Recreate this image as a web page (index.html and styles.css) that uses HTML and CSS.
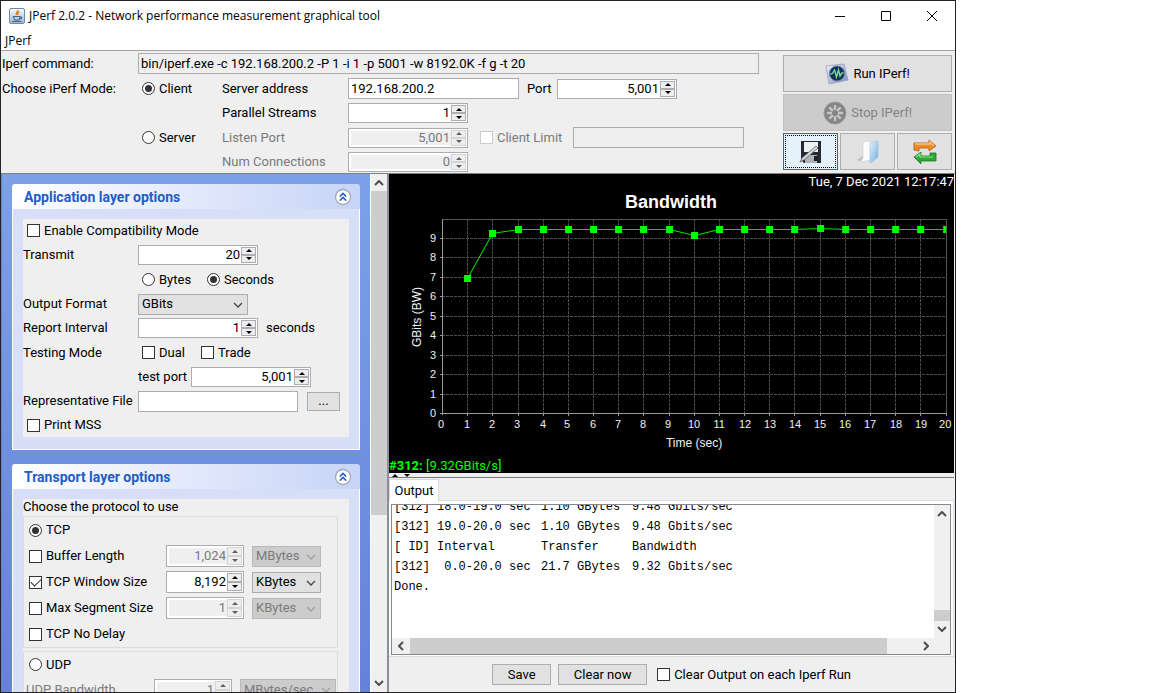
FILE: index.html
```html
<!DOCTYPE html>
<html lang="en">
<head>
<meta charset="utf-8">
<title>JPerf 2.0.2</title>
<link rel="stylesheet" href="styles.css">
</head>
<body>
<svg class="defs" aria-hidden="true">
  <symbol id="chevron" viewBox="0 0 10 6"><path d="M1 1l4 4 4-4" fill="none" stroke="currentColor" stroke-width="1.3"/></symbol>
  <symbol id="arrow" viewBox="0 0 10 6"><path d="M1 1l4 4 4-4" fill="none" stroke="#505050" stroke-width="2"/></symbol>
  <symbol id="collapse" viewBox="0 0 18 18"><circle cx="9" cy="9" r="7.5" fill="#fff" stroke="#a3a9bd" stroke-width="1.3"/><path d="M5.8 8.6L9 5.4l3.2 3.2M5.8 12.6L9 9.4l3.2 3.2" fill="none" stroke="#2a5fd0" stroke-width="1.5"/></symbol>
</svg>
<div class="window">
  <header class="titlebar">
    <svg class="app-icon" viewBox="0 0 16 16"><defs><linearGradient id="cup" x1="0" y1="0" x2="0" y2="1"><stop offset="0" stop-color="#f8fafc"/><stop offset="1" stop-color="#9db9d2"/></linearGradient></defs><rect x=".5" y=".5" width="15" height="15" rx="1.5" fill="url(#cup)" stroke="#6e8ba6"/><path d="M8.6 2C9.6 3.800 6.200 4.200 7.400 7M10.500 3.800C8.500 4.700 8.300 5.500 9 7" fill="none" stroke="#e07a1f" stroke-width="1.300"/><path d="M4.500 8.500h6.500l-.8 3.500H5.500zM11 9c3-.5 2 2-.5 2M3 13.500h9.500" fill="none" stroke="#45688c" stroke-width="1.100"/></svg>
    <h1>JPerf 2.0.2 - Network performance measurement graphical tool</h1>
    <div class="window-buttons">
      <button aria-label="Minimize"><svg viewBox="0 0 12 12"><path d="M1 6.500h10" stroke="#000" fill="none"/></svg></button>
      <button aria-label="Maximize"><svg viewBox="0 0 12 12"><path d="M1.500 1.500h9v9h-9z" stroke="#000" fill="none"/></svg></button>
      <button aria-label="Close"><svg viewBox="0 0 12 12"><path d="M1 1l10 10M11 1L1 11" stroke="#000" fill="none"/></svg></button>
    </div>
  </header>
  <nav class="menubar"><button>JPerf</button></nav>

  <section class="setup">
    <div class="setup-form">
      <label for="cmd">Iperf command:</label>
      <input class="text command" id="cmd" readonly value="bin/iperf.exe -c 192.168.200.2 -P 1 -i 1 -p 5001 -w 8192.0K -f g -t 20">
      <span class="row-start">Choose iPerf Mode:</span>
      <label class="check mode"><input type="radio" name="mode" checked>Client</label>
      <label for="addr">Server address</label>
      <div class="line"><input class="text address" id="addr" value="192.168.200.2"><label class="port" for="port">Port</label><span class="spinner"><input id="port" value="5,001"><span class="steps"><button aria-label="Up"></button><button aria-label="Down"></button></span></span></div>
      <label class="third" for="streams">Parallel Streams</label>
      <div class="line"><span class="spinner"><input id="streams" value="1"><span class="steps"><button aria-label="Up"></button><button aria-label="Down"></button></span></span></div>
      <label class="check mode second"><input type="radio" name="mode">Server</label>
      <label class="off" for="listen">Listen Port</label>
      <div class="line"><span class="spinner disabled"><input id="listen" value="5,001" disabled><span class="steps"><button disabled aria-label="Up"></button><button disabled aria-label="Down"></button></span></span><label class="check off limit"><input type="checkbox" disabled>Client Limit</label><input class="text address" aria-label="Client limit address" disabled></div>
      <label class="third off" for="num">Num Connections</label>
      <div class="line"><span class="spinner disabled"><input id="num" value="0" disabled><span class="steps"><button disabled aria-label="Up"></button><button disabled aria-label="Down"></button></span></span></div>
    </div>
    <div class="actions">
      <button class="btn run"><svg viewBox="0 0 24 22"><defs><linearGradient id="plate" x1="0" y1="0" x2="1" y2="1"><stop offset="0" stop-color="#f2f4fc"/><stop offset="1" stop-color="#7f88bd"/></linearGradient></defs><path d="M1 3l18-2 4 16-19 4z" fill="url(#plate)" stroke="#9aa0c0" stroke-width=".8"/><circle cx="12" cy="10.500" r="7.600" fill="#16305c" stroke="#7186b0"/><path d="M5.500 11l2-.5L9.500 7l2 7 2-7 1.500 6 2-3h1.500" fill="none" stroke="#6fe08a" stroke-width="1.400"/></svg>Run IPerf!</button>
      <button class="btn stop" disabled><svg viewBox="0 0 24 24"><circle cx="12" cy="12" r="11" fill="#858585" stroke="#9a9a9a"/><path d="M12 4v5M12 15v5M4 12h5M15 12h5M6.300 6.300l3.600 3.600M14.100 14.100l3.600 3.600M17.700 6.300l-3.600 3.600M9.900 14.100l-3.600 3.600" stroke="#c6c6c6" stroke-width="2.400"/></svg>Stop IPerf!</button>
      <div class="tools">
        <button class="btn focused" aria-label="Save settings"><svg viewBox="0 0 24 24"><path d="M2 1h20v22H5l-3-3z" fill="#252a30"/><path d="M5 2h14v10H5z" fill="#eef0f2"/><path d="M6 15h12v8H6z" fill="#aeb3b8"/><path d="M15 16h3v5h-3z" fill="#1b1e22"/><path d="M1 22l2-4L17 6l2 2L5 20z" fill="#d5d8db" stroke="#585d62" stroke-width=".8"/></svg></button>
        <button class="btn" aria-label="Open settings"><svg viewBox="0 0 24 24"><defs><linearGradient id="cover" x1="0" y1="0" x2="1" y2="1"><stop offset="0" stop-color="#e6f3fd"/><stop offset="1" stop-color="#6faee0"/></linearGradient></defs><path d="M1 20l6-4v6z" fill="#b9bdc1"/><path d="M7 2l8-1v19l-11 2 3-4z" fill="#fbfcfd" stroke="#cbd2d8" stroke-width=".7"/><path d="M14 3l8-2v16l-7 6-1-1z" fill="url(#cover)" stroke="#9dbdd8" stroke-width=".6"/></svg></button>
        <button class="btn" aria-label="Restore defaults"><svg viewBox="0 0 24 24"><path d="M1 10V3h15V0l7 6-7 5V8H6v3z" fill="#f08a24" stroke="#a95d20" stroke-width=".8"/><path d="M2 4h15V2l4 4" fill="none" stroke="#ffc27c" stroke-width="1.300"/><path d="M23 13v8H8v3l-7-7 7-5v4h9v-3z" fill="#2cab34" stroke="#217426" stroke-width=".8"/><path d="M3 17l4-3v3h13" fill="none" stroke="#8ce77c" stroke-width="1.200"/></svg></button>
      </div>
    </div>
  </section>

  <main class="split">
    <aside class="options">
      <div class="options-view">
        <section class="group">
          <header><h2>Application layer options</h2><button aria-label="Collapse"><svg><use href="#collapse"/></svg></button></header>
          <div class="group-body">
            <div class="app-rows">
              <label class="check"><input type="checkbox">Enable Compatibility Mode</label>
              <div class="row"><label class="name" for="transmit">Transmit</label><span class="spinner"><input id="transmit" value="20"><span class="steps"><button aria-label="Up"></button><button aria-label="Down"></button></span></span></div>
              <div class="row"><span class="name"></span><label class="check bytes"><input type="radio" name="unit">Bytes</label><label class="check"><input type="radio" name="unit" checked>Seconds</label></div>
              <div class="row"><label class="name" for="format">Output Format</label><span class="select format"><select id="format"><option>GBits</option></select><svg><use href="#chevron"/></svg></span></div>
              <div class="row"><label class="name" for="interval">Report Interval</label><span class="spinner"><input id="interval" value="1"><span class="steps"><button aria-label="Up"></button><button aria-label="Down"></button></span></span><span class="unit">seconds</span></div>
              <div class="row"><span class="name">Testing Mode</span><label class="check dual"><input type="checkbox">Dual</label><label class="check"><input type="checkbox">Trade</label></div>
              <div class="row"><span class="name"></span><label class="test-port" for="test">test port</label><span class="spinner"><input id="test" value="5,001"><span class="steps"><button aria-label="Up"></button><button aria-label="Down"></button></span></span></div>
              <div class="row"><label class="name" for="file">Representative File</label><input class="text file" id="file"><button class="btn browse">...</button></div>
              <label class="check"><input type="checkbox">Print MSS</label>
            </div>
          </div>
        </section>
        <section class="group">
          <header><h2>Transport layer options</h2><button aria-label="Collapse"><svg><use href="#collapse"/></svg></button></header>
          <div class="group-body">
            <div class="transport">
              <p>Choose the protocol to use</p>
              <div class="proto">
                <label class="check"><input type="radio" name="proto" checked>TCP</label>
                <div class="row"><label class="check opt"><input type="checkbox">Buffer Length</label><span class="spinner short disabled"><input value="1,024" disabled aria-label="Buffer length"><span class="steps"><button disabled aria-label="Up"></button><button disabled aria-label="Down"></button></span></span><span class="select size"><select disabled aria-label="Buffer unit"><option>MBytes</option></select><svg><use href="#chevron"/></svg></span></div>
                <div class="row"><label class="check opt"><input type="checkbox" checked>TCP Window Size</label><span class="spinner short"><input value="8,192" aria-label="Window size"><span class="steps"><button aria-label="Up"></button><button aria-label="Down"></button></span></span><span class="select size"><select aria-label="Window unit"><option>KBytes</option></select><svg><use href="#chevron"/></svg></span></div>
                <div class="row"><label class="check opt"><input type="checkbox">Max Segment Size</label><span class="spinner short disabled"><input value="1" disabled aria-label="Segment size"><span class="steps"><button disabled aria-label="Up"></button><button disabled aria-label="Down"></button></span></span><span class="select size"><select disabled aria-label="Segment unit"><option>KBytes</option></select><svg><use href="#chevron"/></svg></span></div>
                <label class="check"><input type="checkbox">TCP No Delay</label>
              </div>
              <div class="proto udp">
                <label class="check"><input type="radio" name="proto">UDP</label>
                <div class="row"><label class="opt off" for="udpbw">UDP Bandwidth</label><span class="spinner short disabled"><input id="udpbw" value="1" disabled><span class="steps"><button disabled aria-label="Up"></button><button disabled aria-label="Down"></button></span></span><span class="select rate"><select disabled aria-label="Bandwidth unit"><option>MBytes/sec</option></select><svg><use href="#chevron"/></svg></span></div>
              </div>
            </div>
          </div>
        </section>
      </div>
      <div class="scroll vertical"><svg class="up"><use href="#arrow"/></svg><span class="track"><span class="thumb options-thumb"></span></span><svg><use href="#arrow"/></svg></div>
    </aside>

    <div class="results">
      <section class="chart">
        <time>Tue, 7 Dec 2021 12:17:47</time>
        <svg viewBox="389 190 565 269" role="img" aria-label="Bandwidth chart">
          <text class="chart-title" x="671" y="208">Bandwidth</text>
          <g shape-rendering="crispEdges" fill="none">
            <path stroke="#4d4d4d" stroke-dasharray="3 1" d="M467 219V413M492 219V413M518 219V413M543 219V413M568 219V413M593 219V413M618 219V413M643 219V413M669 219V413M694 219V413M719 219V413M744 219V413M769 219V413M794 219V413M820 219V413M845 219V413M870 219V413M895 219V413M920 219V413M442 394H946M442 374H946M442 355H946M442 335H946M442 316H946M442 296H946M442 277H946M442 257H946M442 238H946"/>
            <path stroke="#555" d="M442 219H946V413"/>
            <path stroke="#999" d="M442 219V415M440 413H946M440 394h2M440 374h2M440 355h2M440 335h2M440 316h2M440 296h2M440 277h2M440 257h2M440 238h2M467 413v3M492 413v3M518 413v3M543 413v3M568 413v3M593 413v3M618 413v3M643 413v3M669 413v3M694 413v3M719 413v3M744 413v3M769 413v3M794 413v3M820 413v3M845 413v3M870 413v3M895 413v3M920 413v3M946 413v3"/>
          </g>
          <polyline fill="none" stroke="#00e000" points="467.500,278.500 492.500,233.500 518.500,229.500 669.500,229.500 694.500,235.500 719.500,229.500 794.500,229.500 820.500,228.500 845.500,229.500 946,229.500"/>
          <path fill="#0f0" d="M464 275h7v7h-7zM489 230h7v7h-7zM515 226h7v7h-7zM540 226h7v7h-7zM565 226h7v7h-7zM590 226h7v7h-7zM615 226h7v7h-7zM640 226h7v7h-7zM666 226h7v7h-7zM691 232h7v7h-7zM716 226h7v7h-7zM741 226h7v7h-7zM766 226h7v7h-7zM791 226h7v7h-7zM817 225h7v7h-7zM842 226h7v7h-7zM867 226h7v7h-7zM892 226h7v7h-7zM917 226h7v7h-7zM943 226h3v7h-3z"/>
          <g class="y-ticks"><text x="436" y="417">0</text><text x="436" y="398">1</text><text x="436" y="378">2</text><text x="436" y="359">3</text><text x="436" y="339">4</text><text x="436" y="320">5</text><text x="436" y="300">6</text><text x="436" y="281">7</text><text x="436" y="261">8</text><text x="436" y="242">9</text></g>
          <g class="x-ticks"><text x="441" y="428">0</text><text x="467" y="428">1</text><text x="492" y="428">2</text><text x="517" y="428">3</text><text x="543" y="428">4</text><text x="567" y="428">5</text><text x="593" y="428">6</text><text x="618" y="428">7</text><text x="643" y="428">8</text><text x="668" y="428">9</text><text x="694" y="428">10</text><text x="719" y="428">11</text><text x="745" y="428">12</text><text x="770" y="428">13</text><text x="795" y="428">14</text><text x="820" y="428">15</text><text x="845" y="428">16</text><text x="870" y="428">17</text><text x="896" y="428">18</text><text x="921" y="428">19</text><text x="945" y="428">20</text></g>
          <text class="axis" x="694" y="447">Time (sec)</text>
          <text class="axis" transform="translate(421 317) rotate(-90)">GBits (BW)</text>
        </svg>
        <p class="status"><b>#312:</b> [9.32GBits/s]</p>
      </section>
      <div class="divider"><i class="tri-up"></i><i class="tri-down"></i></div>
      <section class="output">
        <div class="tabs"><button>Output</button></div>
        <div class="tab-page">
          <div class="console">
            <div class="log">
              <div class="entry"><span>[312]</span><span>18.0-19.0 sec</span><span>1.10 GBytes</span><span>9.48 Gbits/sec</span></div>
              <div class="entry"><span>[312]</span><span>19.0-20.0 sec</span><span>1.10 GBytes</span><span>9.48 Gbits/sec</span></div>
              <div class="entry"><span>[ ID]</span><span>Interval</span><span>Transfer</span><span>Bandwidth</span></div>
              <div class="entry"><span>[312]</span><span> 0.0-20.0 sec</span><span>21.7 GBytes</span><span>9.32 Gbits/sec</span></div>
              <div class="entry"><span>Done.</span></div>
            </div>
            <div class="scroll vertical"><svg class="up"><use href="#arrow"/></svg><span class="track end"><span class="thumb log-thumb"></span></span><svg><use href="#arrow"/></svg></div>
            <div class="scroll horizontal"><svg class="left"><use href="#arrow"/></svg><span class="track"><span class="thumb wide-thumb"></span></span><svg class="right"><use href="#arrow"/></svg></div>
          </div>
        </div>
        <footer><button class="btn save">Save</button><button class="btn clear">Clear now</button><label class="check"><input type="checkbox">Clear Output on each Iperf Run</label></footer>
      </section>
    </div>
  </main>
</div>
</body>
</html>
```
FILE: styles.css
```css
* { box-sizing: border-box; }
body { margin: 0; background: #fff; color: #000; font: 13px/16px Roboto, "Liberation Sans", sans-serif; }
h1, h2, p { margin: 0; }
button, input, select { font: inherit; color: inherit; margin: 0; padding: 0; border-radius: 0; }
button { border: 0; background: none; }
label, button, .name, .unit { white-space: nowrap; }
.defs { position: absolute; width: 0; height: 0; }

.window { width: 83%; min-width: 940px; height: 100vh; display: flex; flex-direction: column; overflow: hidden; border: 1px solid #25222a; }

.titlebar { display: flex; align-items: center; height: 30px; flex: none; padding-left: 8px; gap: 4px; }
.app-icon { width: 16px; height: 16px; }
.titlebar h1 { font: 12px/16px "Open Sans", "Noto Sans", sans-serif; flex: 1; }
.window-buttons { display: flex; }
.window-buttons button { width: 46px; height: 28px; display: grid; place-items: center; }
.window-buttons svg { width: 12px; height: 12px; }
.menubar { flex: none; height: 20px; padding-left: 4px; border-bottom: 1px solid #a0a0a0; }
.menubar button { font: 12px/20px "Open Sans", "Noto Sans", sans-serif; }

.setup { flex: none; display: flex; justify-content: space-between; background: #efefef; height: 123px; padding: 0 3px 0 1px; border-bottom: 1px solid #808080; }
.setup-form { flex: 1; display: grid; grid-template-columns: 136px 84px 126px 1fr; grid-template-rows: 25px 25px 24px 25px 24px; align-items: center; padding-right: 24px; }
.command { grid-column: 2 / 5; }
.mode { padding-left: 4px; }
.second { grid-column: 2; }
.third { grid-column: 3; }
.line { display: flex; align-items: center; }
.port { width: 30px; margin-left: 8px; }
.limit { width: 93px; margin-left: 12px; }
.off { color: #7a7a7a; }

.text { height: 21px; border: 1px solid #abadb3; background: #fff; padding: 0 2px; outline: 0; }
.text:disabled, .text[readonly] { background: #efefef; }
.address { width: 171px; }

.spinner { display: flex; width: 120px; height: 20px; padding: 1px; border: 1px solid #abadb3; background: #fff; }
.spinner > input { flex: 1; min-width: 0; border: 0; background: #fff; text-align: right; padding-right: 1px; outline: 0; }
.steps { display: grid; grid-template-rows: 1fr 1fr; width: 15px; }
.steps button { display: grid; place-items: center; background: #eee; border: 1px solid #abadb3; }
.steps button::before { content: ""; border: 3px solid transparent; border-top-width: 0; border-bottom-color: #000; }
.steps button + button::before { border-width: 3px 3px 0; border-top-color: #000; }
.spinner.disabled > input { background: #efefef; color: #7a7a7a; border: 1px solid #fff; border-right: 0; }
.steps button:disabled { border-color: #d4d4d4; }
.steps button:disabled::before { opacity: .6; }
.short { width: 78px; height: 22px; }

.check { display: flex; align-items: center; gap: 4px; }
.check input { appearance: none; flex: none; width: 13px; height: 13px; border: 1px solid #333; background: #fff; display: grid; place-items: center; }
.check input[type="radio"] { border-radius: 50%; }
.check input[type="radio"]:checked::before { content: ""; width: 7px; height: 7px; border-radius: 50%; background: #333; }
.check input[type="checkbox"]:checked::before { content: ""; width: 9px; height: 5px; border: solid #333; border-width: 0 0 1px 1px; transform: translateY(-1px) rotate(-45deg); }
.check input:disabled { border-color: #ccc; }

.btn { display: flex; align-items: center; justify-content: center; background: #e1e1e1; border: 1px solid #adadad; }
.btn:disabled { background: #ccc; border-color: #bfbfbf; color: #838383; }
.actions { width: 169px; padding: 4px 0 3px; display: flex; flex-direction: column; gap: 2px; }
.run, .stop { height: 37px; gap: 4px; }
.run svg, .stop svg { width: 24px; height: 24px; }
.tools { display: grid; grid-template-columns: 1fr 1fr 1fr; gap: 2px; }
.tools .btn { height: 37px; }
.tools svg { width: 24px; height: 24px; }
.tools .focused { background: #e5f1fb; border-color: #0078d7; outline: 1px dotted #000; outline-offset: -3px; }

.split { flex: 1; min-height: 0; display: flex; background: #efefef; }
.options { flex: none; display: flex; width: 388px; border-left: 1px solid #6a7fb5; border-right: 2px solid #8b8f96; }
.options-view { flex: 1; overflow: hidden; padding: 10px 10px 0 10px; background: linear-gradient(#7ba2e7, #6681da); display: flex; flex-direction: column; gap: 14px; border-right: 1px solid #fff; }
.group { flex: none; }
.group header { height: 25px; display: flex; align-items: center; justify-content: space-between; padding: 0 8px 0 12px; border-radius: 3px 3px 0 0; background: linear-gradient(to right, #fff, #c7d4f7); }
.group h2 { font-size: 14px; line-height: 18px; color: #215dc6; }
.group header button, .group header svg { display: block; width: 18px; height: 18px; }
.group-body { background: #d6dff7; border: 1px solid #fff; border-top: 0; padding: 10px 10px 12px; }
.app-rows { background: #efefef; display: grid; grid-template-rows: 23px 25px 25px 24px 24px 25px 24px 24px 24px; align-items: center; }
.app-rows > .check { padding-left: 4px; }
.row { display: flex; align-items: center; }
.name { width: 115px; }
.row .name + .check { margin-left: 4px; }
.bytes { width: 65px; }
.dual { width: 59px; }
.unit { margin-left: 8px; }
.test-port { width: 53px; }
.file { width: 160px; }
.browse { width: 33px; height: 19px; margin-left: 9px; }

.select { position: relative; display: block; }
.select select { appearance: none; display: block; width: 100%; height: 21px; padding: 0 3px; border: 1px solid #adadad; background: #e1e1e1; }
.select select:disabled { background: #ccc; border-color: #b8b8bc; color: #7a7a7a; opacity: 1; }
.select svg { position: absolute; right: 5px; top: 8px; width: 10px; height: 6px; color: #444; pointer-events: none; }
.select select:disabled + svg { color: #a0a0a0; }
.format { width: 110px; }
.size { width: 69px; margin-left: 8px; }
.rate { width: 96px; margin-left: 8px; }

.transport { background: #efefef; }
.transport p { height: 17px; }
.proto { width: 315px; border: 1px solid #dcdcdc; display: grid; grid-auto-rows: 26px; align-items: center; padding-left: 5px; }
.udp { margin-top: 3px; grid-auto-rows: 25px; }
.opt { width: 137px; }
.udp .row { margin-left: -4px; }
.udp .opt { width: 129px; padding-left: 1px; }

.scroll { background: #f0f0f0; display: flex; align-items: center; }
.scroll svg { flex: none; width: 10px; height: 6px; }
.vertical { width: 16px; flex-direction: column; padding: 6px 0; gap: 5px; }
.horizontal { padding: 0 19px 0 4px; gap: 4px; }
.track { flex: 1; display: flex; align-self: stretch; }
.thumb { background: #cdcdcd; }
.end { align-items: flex-end; }
.up { transform: rotate(180deg); }
.left { transform: rotate(90deg); }
.right { transform: rotate(-90deg); }
.options-thumb { width: 100%; height: 67%; }
.log-thumb { width: 100%; height: 11px; }
.wide-thumb { width: 94%; }

.results { flex: 1; min-width: 0; display: flex; flex-direction: column; padding-right: 1px; }
.chart { flex: none; background: #000; color: #fff; display: flex; flex-direction: column; }
.chart time { text-align: right; height: 16px; }
.chart svg { display: block; width: 100%; }
.chart text { font: 11px "Liberation Sans", sans-serif; fill: #f0f0f0; text-anchor: middle; }
.chart .y-ticks text { text-anchor: end; }
.chart .axis { font-size: 12px; }
.chart .chart-title { font-size: 18px; font-weight: bold; fill: #fff; }
.status { color: #0f0; line-height: 14px; }
.divider { flex: none; height: 5px; display: flex; align-items: center; gap: 6px; padding-left: 3px; border-bottom: 1px solid #777; }
.tri-up { border: solid transparent; border-width: 0 3px 3px; border-bottom-color: #000; }
.tri-down { border: solid transparent; border-width: 3px 3px 0; border-top-color: #000; }
.output { flex: 1; min-height: 0; display: flex; flex-direction: column; padding-top: 1px; }
.tabs { display: flex; height: 22px; border-bottom: 1px solid #dcdcdc; }
.tabs button { width: 50px; height: 22px; background: #fff; border: 1px solid #d9d9d9; border-bottom: 0; }
.tab-page { flex: 1; min-height: 0; background: #fff; padding: 3px 2px 1px; border: 1px solid #dcdcdc; border-top: 0; border-left: 0; display: flex; }
.console { flex: 1; display: grid; grid-template-columns: 1fr 16px; grid-template-rows: 1fr 16px; border: 1px solid #828790; min-height: 0; }
.console .horizontal { grid-column: 1 / 3; }
.log { overflow: hidden; display: flex; flex-direction: column; justify-content: flex-start; padding-left: 2px; font: 12px/20px "Liberation Mono", monospace; }
.entry { flex: none; display: grid; grid-template-columns: 43px 104px 91px 1fr; white-space: pre; }
.entry:first-child { margin-top: -8px; }
.output footer { flex: none; height: 35px; display: flex; align-items: center; justify-content: center; gap: 7px; }
.save { width: 59px; height: 21px; }
.clear { width: 89px; height: 21px; margin-right: 3px; }
```
